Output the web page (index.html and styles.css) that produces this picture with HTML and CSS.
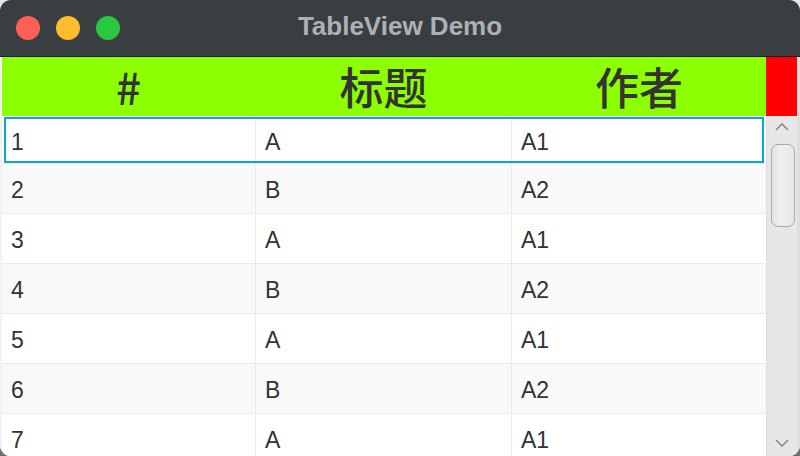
FILE: index.html
```html
<!DOCTYPE html>
<html>
<head>
<meta charset="utf-8">
<title>TableView Demo</title>
<link rel="stylesheet" href="styles.css">
</head>
<body>
<div class="window">
  <div class="titlebar">
    <div class="lights">
      <span class="light red"></span>
      <span class="light yellow"></span>
      <span class="light green"></span>
    </div>
    <div class="title">TableView Demo</div>
  </div>
  <div class="content">
    <div class="edge-left"></div>
    <div class="table">
      <div class="thead">
        <div class="th">#</div>
        <div class="th">标题</div>
        <div class="th">作者</div>
      </div>
      <div class="tbody">
        <div class="tr first focused"><div class="td">1</div><div class="td">A</div><div class="td">A1</div></div>
        <div class="tr alt"><div class="td">2</div><div class="td">B</div><div class="td">A2</div></div>
        <div class="tr"><div class="td">3</div><div class="td">A</div><div class="td">A1</div></div>
        <div class="tr alt"><div class="td">4</div><div class="td">B</div><div class="td">A2</div></div>
        <div class="tr"><div class="td">5</div><div class="td">A</div><div class="td">A1</div></div>
        <div class="tr alt"><div class="td">6</div><div class="td">B</div><div class="td">A2</div></div>
        <div class="tr"><div class="td">7</div><div class="td">A</div><div class="td">A1</div></div>
        <div class="tr alt"><div class="td">8</div><div class="td">B</div><div class="td">A2</div></div>
      </div>
    </div>
    <div class="side">
      <div class="corner"></div>
      <div class="scrollbar">
        <svg class="arrow" width="16" height="10" viewBox="0 0 16 10"><path d="M2 8 L8 2 L14 8" fill="none" stroke="#8a8a8a" stroke-width="1.6"/></svg>
        <div class="track">
          <div class="thumb"></div>
        </div>
        <svg class="arrow" width="16" height="10" viewBox="0 0 16 10"><path d="M2 2 L8 8 L14 2" fill="none" stroke="#8a8a8a" stroke-width="1.6"/></svg>
      </div>
    </div>
    <div class="edge-right"></div>
  </div>
</div>
</body>
</html>
```

FILE: styles.css
```css
* { box-sizing: border-box; }
html, body { margin: 0; padding: 0; }
body {
  width: 800px;
  height: 456px;
  overflow: hidden;
  background: linear-gradient(#e6e6e6 50%, #6f6f6f 50%);
}
.window {
  width: 800px;
  height: 456px;
  border-radius: 11px;
  overflow: hidden;
  display: flex;
  flex-direction: column;
  background: #ffffff;
}
.titlebar {
  height: 57px;
  flex: none;
  background: #393e40;
  border-bottom: 1px solid #1c1f20;
  display: flex;
  align-items: center;
  position: relative;
}
.lights {
  display: flex;
  gap: 16px;
  padding-left: 16px;
  padding-bottom: 1px;
}
.light {
  width: 24px;
  height: 24px;
  border-radius: 50%;
  display: block;
}
.light.red { background: #fe5f57; }
.light.yellow { background: #febc2e; }
.light.green { background: #28c840; }
.title {
  position: absolute;
  left: 0;
  right: 0;
  top: 11px;
  text-align: center;
  font-family: "Liberation Sans", Arial, sans-serif;
  font-weight: bold;
  font-size: 26px;
  color: #aeb1b3;
}
.content {
  flex: 1;
  display: flex;
  min-height: 0;
}
.edge-left {
  width: 2px;
  flex: none;
  background: #f2f2f2;
}
.table {
  width: 764px;
  flex: none;
  display: flex;
  flex-direction: column;
  overflow: hidden;
}
.thead {
  height: 59px;
  flex: none;
  background: #8cff00;
  display: grid;
  grid-template-columns: 253px 255px 254px;
  column-gap: 1px;
}
.th {
  text-align: center;
  font-family: "Noto Sans CJK SC", "Liberation Sans", sans-serif;
  font-size: 44px;
  font-weight: 500;
  color: #333333;
  padding-top: 3px;
  line-height: 52px;
}
.tbody {
  display: flex;
  flex-direction: column;
}
.tr {
  height: 50px;
  flex: none;
  display: grid;
  grid-template-columns: 253px 255px 254px;
  column-gap: 1px;
  background: #ebebeb;
  border-bottom: 1px solid #ebebeb;
  position: relative;
}
.tr.first { height: 48px; }
.td {
  background: #ffffff;
  display: flex;
  align-items: center;
  padding-left: 9px;
  padding-top: 4px;
  font-family: "Liberation Sans", Arial, sans-serif;
  font-size: 23px;
  color: #333333;
}
.tr.first .td { padding-top: 5px; }
.tr.alt .td { background: #f9f9f9; }
.tr.focused::after {
  content: "";
  position: absolute;
  left: 2px;
  right: 2px;
  top: 1px;
  bottom: 0;
  border: 2px solid #0aa6d6;
}
.side {
  width: 31px;
  flex: none;
  display: flex;
  flex-direction: column;
}
.corner {
  height: 59px;
  flex: none;
  background: #ff0000;
}
.scrollbar {
  flex: 1;
  background: #e7e7e7;
  border-left: 1px solid #dcdcdc;
  display: flex;
  flex-direction: column;
  align-items: center;
  padding: 6px 0 8px 0;
}
.arrow { flex: none; }
.track {
  flex: 1;
  width: 100%;
  padding: 12px 2px 0 4px;
}
.thumb {
  width: 24px;
  height: 83px;
  border: 1px solid #a9a9a9;
  border-radius: 7px;
  background: linear-gradient(90deg, #e2e2e2, #f0f0f0 40%, #e6e6e6);
}
.edge-right {
  width: 3px;
  flex: none;
  background: #dedede;
}
```
